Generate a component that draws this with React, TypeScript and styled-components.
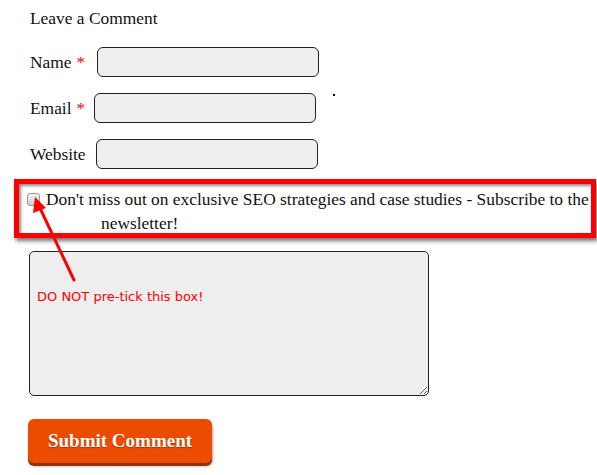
import styled, { createGlobalStyle } from 'styled-components';

const GlobalStyle = createGlobalStyle`
	html, body {
		margin: 0;
		padding: 0;
		background: #ffffff;
	}
	body {
		font-family: 'Liberation Serif', 'Times New Roman', serif;
		color: #111111;
	}
`;

const fields = [
	{ label: 'Name', required: true, offset: 0 },
	{ label: 'Email', required: true, offset: -3 },
	{ label: 'Website', required: false, offset: 0 },
];

export default function App() {
	return (
		<>
			<GlobalStyle />
			<S.Page>
				<S.Title>Leave a Comment</S.Title>
				{fields.map((f) => (
					<S.FieldRow key={f.label}>
						<S.Label $required={f.required}>
							{f.label}
							{f.required && <S.Required>*</S.Required>}
						</S.Label>
						<S.Input type="text" $offset={f.offset} />
					</S.FieldRow>
				))}
				<S.Speck />
				<S.Highlight>
					<S.Checkbox type="checkbox" />
					<S.ConsentText>
						<S.NoWrap>Don't miss out on exclusive SEO strategies and case studies - Subscribe to the</S.NoWrap>
						<br />
						newsletter!
					</S.ConsentText>
				</S.Highlight>
				<S.CommentArea>
					<S.TextArea />
					<S.Note>DO NOT pre-tick this box!</S.Note>
				</S.CommentArea>
				<S.Arrow width="60" height="90" viewBox="0 0 60 90">
					<line x1="50" y1="84" x2="15" y2="10" stroke="#ff0000" strokeWidth="3" strokeLinecap="round" />
					<polygon points="11,1 9,17 22,12" fill="#ff0000" />
				</S.Arrow>
				<S.Submit type="button">Submit Comment</S.Submit>
			</S.Page>
		</>
	);
}

namespace S {
	export const Page = styled.div`
		position: relative;
		width: 597px;
		height: 475px;
		overflow: hidden;
		padding: 7px 0 0 30px;
		box-sizing: border-box;
	`;

	export const Title = styled.div`
		font-size: 17.4px;
		line-height: 22px;
		margin-bottom: 18px;
	`;

	export const FieldRow = styled.div`
		display: flex;
		align-items: center;
		height: 30px;
		margin-bottom: 16px;
	`;

	export const Label = styled.label<{ $required: boolean }>`
		font-size: 17.4px;
		padding-right: ${(p) => (p.$required ? 12 : 10)}px;
	`;

	export const Required = styled.span`
		color: #ff0000;
		margin-left: 5px;
	`;

	export const Input = styled.input<{ $offset: number }>`
		width: 222px;
		height: 30px;
		box-sizing: border-box;
		margin: 0 0 0 ${(p) => p.$offset}px;
		border: 1px solid #222222;
		border-radius: 6px;
		background: #eeeeee;
		outline: none;
	`;

	export const Speck = styled.span`
		position: absolute;
		left: 333px;
		top: 94px;
		width: 2px;
		height: 2px;
		background: #000000;
	`;

	export const Highlight = styled.div`
		display: flex;
		align-items: flex-start;
		width: 582px;
		height: 59px;
		box-sizing: border-box;
		margin: -6px 0 0 -16px;
		padding: 7px 0 0 8px;
		border: 5px solid #ff0000;
		box-shadow: 2px 3px 4px rgba(0, 0, 0, 0.55), inset 2px 2px 3px rgba(0, 0, 0, 0.45);
	`;

	export const Checkbox = styled.input`
		appearance: none;
		width: 13px;
		height: 13px;
		margin: 2px 6px 0 0;
		border: 1px solid #9a9a9a;
		border-radius: 3px;
		background: linear-gradient(#f2f2f2, #cfcfcf);
		flex-shrink: 0;
	`;

	export const ConsentText = styled.div`
		font-size: 17.4px;
		line-height: 24px;
		margin-top: -4px;
		padding-left: 55px;
		text-indent: -55px;
	`;

	export const NoWrap = styled.span`
		white-space: nowrap;
	`;

	export const CommentArea = styled.div`
		position: relative;
		width: 400px;
		margin: 13px 0 0 -1px;
	`;

	export const TextArea = styled.textarea`
		display: block;
		width: 400px;
		height: 145px;
		box-sizing: border-box;
		margin: 0;
		border: 1px solid #222222;
		border-radius: 5px;
		background: #eeeeee;
		outline: none;
	`;

	export const Note = styled.div`
		position: absolute;
		left: 8px;
		top: 38px;
		font-family: 'DejaVu Sans', Verdana, sans-serif;
		font-size: 13px;
		color: #ff0000;
	`;

	export const Arrow = styled.svg`
		position: absolute;
		left: 24px;
		top: 196px;
	`;

	export const Submit = styled.button`
		display: block;
		width: 184px;
		height: 44px;
		margin: 23px 0 0 -2px;
		border: none;
		border-radius: 6px;
		background: #ec4c00;
		box-shadow: 0 3px 0 #983000, 1px 3px 3px rgba(0, 0, 0, 0.35);
		color: #ffffff;
		font-family: 'Liberation Serif', 'Times New Roman', serif;
		font-weight: bold;
		font-size: 19px;
		text-shadow: 0 1px 1px rgba(0, 0, 0, 0.3);
	`;
}
